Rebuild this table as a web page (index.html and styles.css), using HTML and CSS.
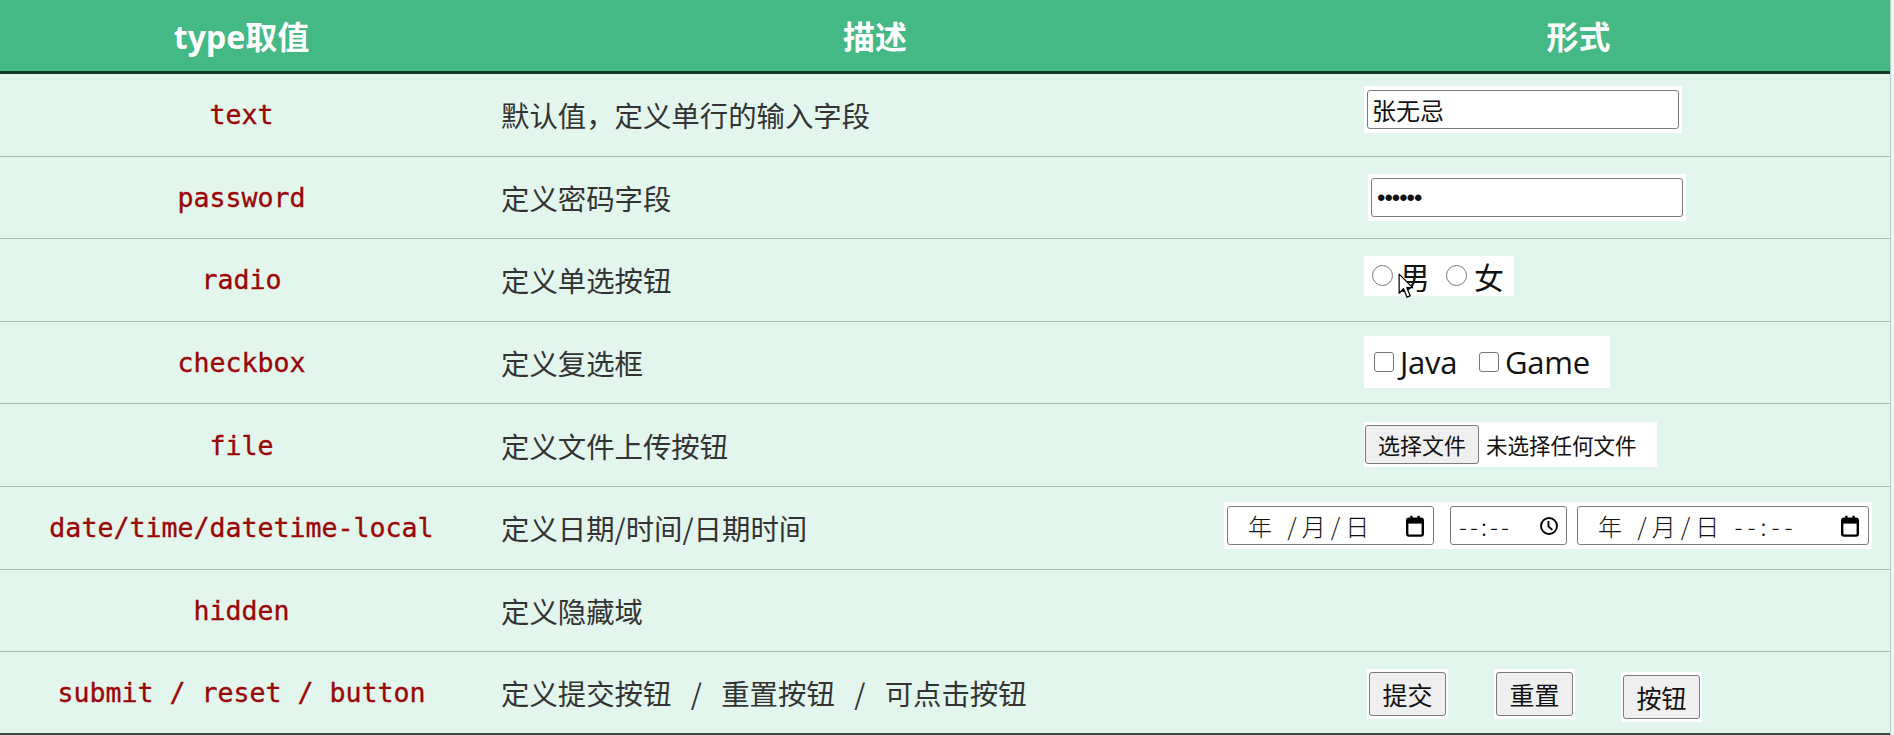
FILE: index.html
```html
<!DOCTYPE html>
<html lang="zh-CN">
<head>
<meta charset="utf-8">
<title>input type</title>
<link rel="stylesheet" href="styles.css">
</head>
<body>
<div class="table">
  <div class="row head">
    <div class="cell c1">type取值</div>
    <div class="cell c2">描述</div>
    <div class="cell c3">形式</div>
  </div>

  <div class="row">
    <div class="cell c1 code">text</div>
    <div class="cell c2 desc">默认值，定义单行的输入字段</div>
    <div class="cell c3 form">
      <span class="snap"><input class="field" type="text" value="张无忌"></span>
    </div>
  </div>

  <div class="row">
    <div class="cell c1 code">password</div>
    <div class="cell c2 desc">定义密码字段</div>
    <div class="cell c3 form">
      <span class="snap snap-pw"><input class="field pw" type="password" value="123456"></span>
    </div>
  </div>

  <div class="row">
    <div class="cell c1 code">radio</div>
    <div class="cell c2 desc">定义单选按钮</div>
    <div class="cell c3 form">
      <span class="snap snap-radio">
        <label class="opt"><input class="radio" type="radio" name="sex">男</label>
        <label class="opt"><input class="radio" type="radio" name="sex">女</label>
        <svg class="cursor" width="18" height="27" viewBox="0 0 16 24"><path d="M1 1 L1 18 L5 14 L8 21.5 L10.8 20.3 L7.8 13 L13 13 Z" fill="#fff" stroke="#000" stroke-width="1.1" stroke-linejoin="round"/></svg>
      </span>
    </div>
  </div>

  <div class="row">
    <div class="cell c1 code">checkbox</div>
    <div class="cell c2 desc">定义复选框</div>
    <div class="cell c3 form">
      <span class="snap snap-check">
        <label class="opt latin"><input class="check" type="checkbox">Java</label>
        <label class="opt latin"><input class="check" type="checkbox">Game</label>
      </span>
    </div>
  </div>

  <div class="row">
    <div class="cell c1 code">file</div>
    <div class="cell c2 desc">定义文件上传按钮</div>
    <div class="cell c3 form">
      <span class="snap snap-file">
        <span class="btn filebtn">选择文件</span>
        <span class="filename">未选择任何文件</span>
      </span>
    </div>
  </div>

  <div class="row">
    <div class="cell c1 code">date/time/datetime-local</div>
    <div class="cell c2 desc">定义日期/时间/日期时间</div>
    <div class="cell c3 form form-date">
      <span class="snap snap-date">
        <span class="dt date"><span class="dtext">年 /月/日</span>
          <svg class="ico" width="22" height="24" viewBox="0 0 18 20"><rect x="2.5" y="4" width="13" height="14" rx="1.5" fill="none" stroke="#000" stroke-width="2"/><rect x="2.5" y="4" width="13" height="4" fill="#000"/><rect x="5" y="1.5" width="2" height="3" fill="#000"/><rect x="11" y="1.5" width="2" height="3" fill="#000"/></svg>
        </span>
        <span class="dt time"><span class="dtext">--:--</span>
          <svg class="ico" width="20" height="20" viewBox="0 0 18 18"><circle cx="9" cy="9" r="7.2" fill="none" stroke="#000" stroke-width="1.7"/><path d="M8.5 4.5 V9.3 L12 12.5" fill="none" stroke="#000" stroke-width="1.7"/></svg>
        </span>
        <span class="dt dtl"><span class="dtext">年 /月/日 --:--</span>
          <svg class="ico" width="22" height="24" viewBox="0 0 18 20"><rect x="2.5" y="4" width="13" height="14" rx="1.5" fill="none" stroke="#000" stroke-width="2"/><rect x="2.5" y="4" width="13" height="4" fill="#000"/><rect x="5" y="1.5" width="2" height="3" fill="#000"/><rect x="11" y="1.5" width="2" height="3" fill="#000"/></svg>
        </span>
      </span>
    </div>
  </div>

  <div class="row">
    <div class="cell c1 code">hidden</div>
    <div class="cell c2 desc">定义隐藏域</div>
    <div class="cell c3 form"></div>
  </div>

  <div class="row last">
    <div class="cell c1 code">submit / reset / button</div>
    <div class="cell c2 desc">定义提交按钮 <span class="sep">/</span> 重置按钮 <span class="sep">/</span> 可点击按钮</div>
    <div class="cell c3 form form-btns">
      <span class="snap"><button class="btn" type="submit">提交</button></span>
      <span class="snap"><button class="btn" type="reset">重置</button></span>
      <span class="snap snap-low"><button class="btn" type="button">按钮</button></span>
    </div>
  </div>
</div>
</body>
</html>
```

FILE: styles.css
```css
* { box-sizing: border-box; }

html, body {
  margin: 0;
  padding: 0;
  background: #eef7f3;
}

body {
  width: 1894px;
  height: 735px;
  overflow: hidden;
  font-family: "Noto Sans CJK SC", "Noto Sans", sans-serif;
}

.table {
  width: 1891px;
  background: #e3f6ee;
  border-right: 1px solid #b9cbc2;
}

.row {
  display: grid;
  grid-template-columns: 483px 784px 1fr;
  height: 82.6px;
  border-bottom: 1px solid #a9bcb3;
  align-items: center;
}

.row.head {
  height: 74px;
  background: #44b985;
  border-bottom: 3px solid #163a29;
  color: #fff;
  font-family: "Noto Sans", "Noto Sans CJK SC", sans-serif;
  font-weight: 700;
  font-size: 32px;
}

.row.last {
  border-bottom: 2px solid #3b4a43;
}

.cell {
  white-space: nowrap;
}

.head .cell {
  text-align: center;
  padding-bottom: 2px;
}

.c1 { text-align: center; }

.code {
  font-family: "DejaVu Sans Mono", "Liberation Mono", monospace;
  font-size: 26.6px;
  color: #9a0606;
  -webkit-text-stroke: 0.35px #9a0606;
}

.desc {
  padding-left: 18px;
  font-size: 28.4px;
  color: #333;
}

.sep {
  display: inline-block;
  margin: 0 13px;
}

.form {
  padding-left: 97px;
  display: flex;
  align-items: center;
  margin-top: -10px;
}

.form-date {
  padding-left: 0;
  margin-left: -43px;
  margin-top: -4px;
}

.form-btns {
  padding-left: 100px;
  margin-top: 4px;
  gap: 46px;
}

.snap {
  position: relative;
  display: inline-flex;
  align-items: center;
  background: #fff;
  padding: 4px 3px;
}

.field {
  width: 312px;
  height: 39px;
  border: 1px solid #7b7b7b;
  border-radius: 3px;
  padding: 0 4px;
  font-family: "Noto Sans CJK SC", sans-serif;
  font-size: 24px;
  color: #111;
  background: #fff;
  outline: none;
}

.pw {
  font-family: "Liberation Sans", sans-serif;
  font-size: 24px;
  letter-spacing: -1px;
  padding-left: 5px;
}

.snap-pw { margin-left: 4px; margin-top: 11px; }

.snap-radio {
  padding: 3px 10px 3px 8px;
  gap: 16px;
  margin-top: 2px;
}

.opt {
  display: inline-flex;
  align-items: center;
  font-family: "Noto Sans CJK SC", sans-serif;
  font-size: 30px;
  color: #111;
  line-height: 1.15;
}

.radio {
  appearance: none;
  -webkit-appearance: none;
  width: 21px;
  height: 21px;
  margin: 0 7px 0 0;
  border: 1.6px solid #777;
  border-radius: 50%;
  background: #fff;
}

.cursor {
  position: absolute;
  left: 34px;
  top: 17px;
}

.snap-check {
  padding: 9px 20px 9px 10px;
  gap: 22px;
  margin-top: 8px;
}

.latin {
  font-family: "Open Sans", "Noto Sans", sans-serif;
  font-size: 31px;
  letter-spacing: -0.3px;
  line-height: 1.1;
}

.check {
  appearance: none;
  -webkit-appearance: none;
  width: 20px;
  height: 20px;
  margin: 0 6px 0 0;
  border: 1.6px solid #777;
  border-radius: 3px;
  background: #fff;
}

.snap-file {
  padding: 3px 20px 3px 1px;
  margin-top: 8px;
}

.btn {
  display: inline-flex;
  align-items: center;
  justify-content: center;
  height: 42px;
  padding: 0 8px;
  border: 1.5px solid #7b7b7b;
  border-radius: 3px;
  background: #efefef;
  font-family: "Noto Sans CJK SC", sans-serif;
  font-size: 24px;
  color: #111;
}

.filebtn {
  height: 39px;
  width: 114px;
  padding: 0;
  font-size: 22px;
}

.filename {
  margin-left: 7px;
  font-size: 21.5px;
  color: #111;
}

.snap-date {
  padding: 4px 3px;
  gap: 14px;
}

.dt {
  display: inline-flex;
  align-items: center;
  justify-content: space-between;
  height: 39px;
  border: 1px solid #7b7b7b;
  border-radius: 3px;
  background: #fff;
  font-family: "Noto Sans CJK SC", sans-serif;
  font-weight: 300;
  font-size: 24px;
  color: #111;
  padding: 0 7px 0 20px;
}

.dtext { white-space: pre; letter-spacing: 5px; }

.date { width: 207px; }
.time { width: 117px; padding-left: 8px; margin-left: 2px; }
.time .dtext { letter-spacing: 3px; }
.dtl { width: 292px; margin-left: -4px; }

.ico { flex: none; }

.form-btns .snap { padding: 3px 2px; }
.form-btns .btn { width: 77px; height: 44px; padding: 0; font-size: 25px; }
.snap-low { margin-top: 6px; }
```
